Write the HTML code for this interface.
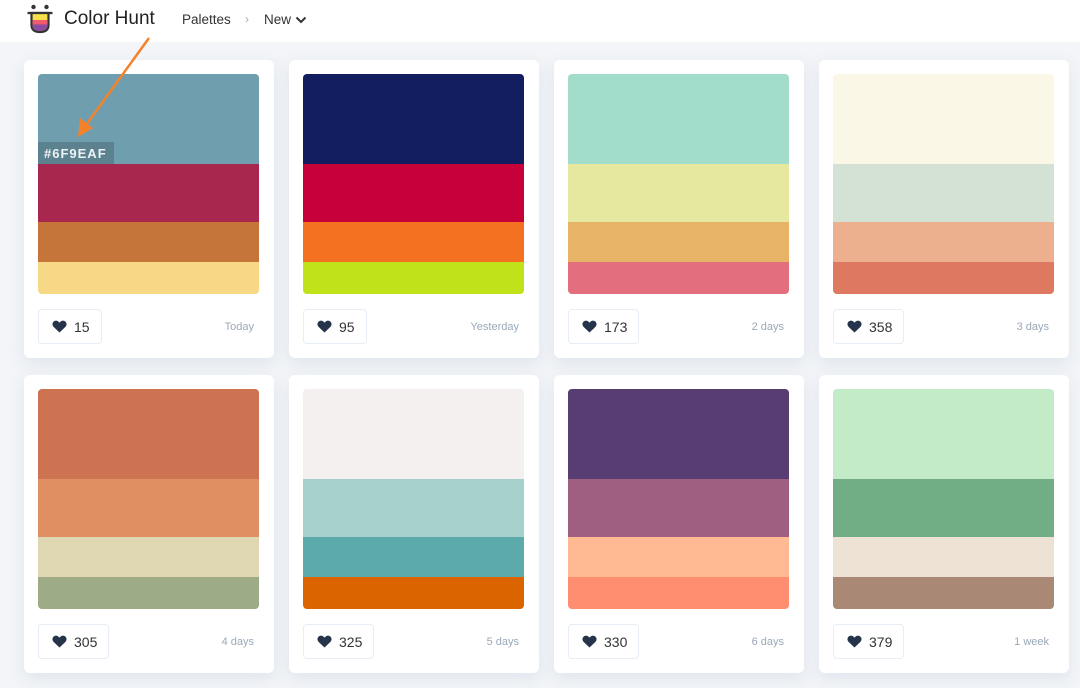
<!DOCTYPE html>
<html><head><meta charset="utf-8"><style>
*{margin:0;padding:0;box-sizing:border-box}
body{width:1080px;height:688px;overflow:hidden;background:#f3f5f8;font-family:"Liberation Sans",sans-serif;position:relative}
.hdr{position:absolute;left:0;top:0;width:1080px;height:42px;background:#fff}
.logo{position:absolute;left:27px;top:4px}
.brand{position:absolute;left:64px;top:8px;font-size:19px;color:#222}
.nav{position:absolute;top:12px;font-size:13.5px;color:#333}
.card{position:absolute;width:250px;height:298px;background:#fff;border-radius:6px;box-shadow:0 6px 16px rgba(200,210,225,.45)}
.pal{position:absolute;left:14px;top:14px;width:221px;height:220px;border-radius:4px;overflow:hidden}
.pal div{width:100%}
.like{position:absolute;left:14px;top:249px;height:35px;border:1px solid #e6edf5;border-radius:4px;font-size:14px;color:#333;padding:0 11px 0 13px;display:flex;align-items:center;gap:7px}
.date{position:absolute;right:20px;top:261px;font-size:11px;color:#9aa8b8}
</style></head><body>
<div class="hdr">
<svg class="logo" width="26" height="30" viewBox="0 0 26 30">
<circle cx="6.5" cy="3" r="2.2" fill="#333"/><circle cx="19.5" cy="3" r="2.2" fill="#333"/>
<path d="M0.5 9 H25.5" stroke="#333" stroke-width="2.2"/>
<path d="M4.5 9 H21.5 V21 Q21.5 28 13 28 Q4.5 28 4.5 21 Z" fill="#f7e04a" stroke="#333" stroke-width="2.2"/>
<rect x="5.6" y="16" width="14.8" height="4.5" fill="#ef5a6d"/>
<path d="M5.6 20.5 H20.4 Q20.4 27 13 27 Q5.6 27 5.6 20.5Z" fill="#8a4ba0"/>
</svg>
<div class="brand">Color Hunt</div>
<div class="nav" style="left:182px">Palettes</div>
<div class="nav" style="left:245px;color:#aaa;font-size:12px">›</div>
<div class="nav" style="left:264px">New <svg width="12" height="8" viewBox="0 0 12 8"><path d="M1.5 1.5 L6 6 L10.5 1.5" stroke="#333" stroke-width="2" fill="none"/></svg></div>
</div>
<svg width="0" height="0" style="position:absolute"><defs><symbol id="h" viewBox="0 0 16 14"><path d="M8 13.5 L1.6 7.4 Q-0.6 4.8 1.2 2.2 Q3.4 -0.4 6.4 1.4 L8 2.8 L9.6 1.4 Q12.6 -0.4 14.8 2.2 Q16.6 4.8 14.4 7.4 Z" fill="#25344a"/></symbol></defs></svg>

<div class="card" style="left:24px;top:60px"><div class="pal"><div style="height:90px;background:#6f9eaf"></div><div style="height:58px;background:#a7274f"></div><div style="height:40px;background:#c5743a"></div><div style="height:32px;background:#f7d886"></div></div><div class="like"><svg width="15" height="13"><use href="#h"/></svg>15</div><div class="date">Today</div>
<div style="position:absolute;left:14px;top:82px;width:76px;height:22px;background:#5d828f;color:#eef3f5;font-weight:bold;font-size:13px;letter-spacing:1px;padding:4px 0 0 6px">#6F9EAF</div></div>
<div class="card" style="left:289px;top:60px"><div class="pal"><div style="height:90px;background:#111d5e"></div><div style="height:58px;background:#c70039"></div><div style="height:40px;background:#f37121"></div><div style="height:32px;background:#c0e218"></div></div><div class="like"><svg width="15" height="13"><use href="#h"/></svg>95</div><div class="date">Yesterday</div></div>
<div class="card" style="left:554px;top:60px"><div class="pal"><div style="height:90px;background:#a2dccb"></div><div style="height:58px;background:#e6e8a0"></div><div style="height:40px;background:#e7b467"></div><div style="height:32px;background:#e36f7e"></div></div><div class="like"><svg width="15" height="13"><use href="#h"/></svg>173</div><div class="date">2 days</div></div>
<div class="card" style="left:819px;top:60px"><div class="pal"><div style="height:90px;background:#faf7e6"></div><div style="height:58px;background:#d4e2d6"></div><div style="height:40px;background:#ecb08f"></div><div style="height:32px;background:#df7861"></div></div><div class="like"><svg width="15" height="13"><use href="#h"/></svg>358</div><div class="date">3 days</div></div>

<div class="card" style="left:24px;top:375px"><div class="pal"><div style="height:90px;background:#cd7352"></div><div style="height:58px;background:#e08f62"></div><div style="height:40px;background:#ded7b1"></div><div style="height:32px;background:#9dab86"></div></div><div class="like"><svg width="15" height="13"><use href="#h"/></svg>305</div><div class="date">4 days</div></div>
<div class="card" style="left:289px;top:375px"><div class="pal"><div style="height:90px;background:#f5f0f0"></div><div style="height:58px;background:#a5d0cb"></div><div style="height:40px;background:#5caaa9"></div><div style="height:32px;background:#db6400"></div></div><div class="like"><svg width="15" height="13"><use href="#h"/></svg>325</div><div class="date">5 days</div></div>
<div class="card" style="left:554px;top:375px"><div class="pal"><div style="height:90px;background:#583d72"></div><div style="height:58px;background:#9f5f80"></div><div style="height:40px;background:#ffba93"></div><div style="height:32px;background:#ff8e71"></div></div><div class="like"><svg width="15" height="13"><use href="#h"/></svg>330</div><div class="date">6 days</div></div>
<div class="card" style="left:819px;top:375px"><div class="pal"><div style="height:90px;background:#c4ebc8"></div><div style="height:58px;background:#71ae86"></div><div style="height:40px;background:#ede2d3"></div><div style="height:32px;background:#a98875"></div></div><div class="like"><svg width="15" height="13"><use href="#h"/></svg>379</div><div class="date">1 week</div></div>

<svg style="position:absolute;left:0;top:0" width="200" height="160">
<path d="M149 38 L86 125" stroke="#f5822a" stroke-width="2.5" fill="none"/>
<path d="M78 137 L80 118 L93 128 Z" fill="#f5822a"/>
</svg>
</body></html>
